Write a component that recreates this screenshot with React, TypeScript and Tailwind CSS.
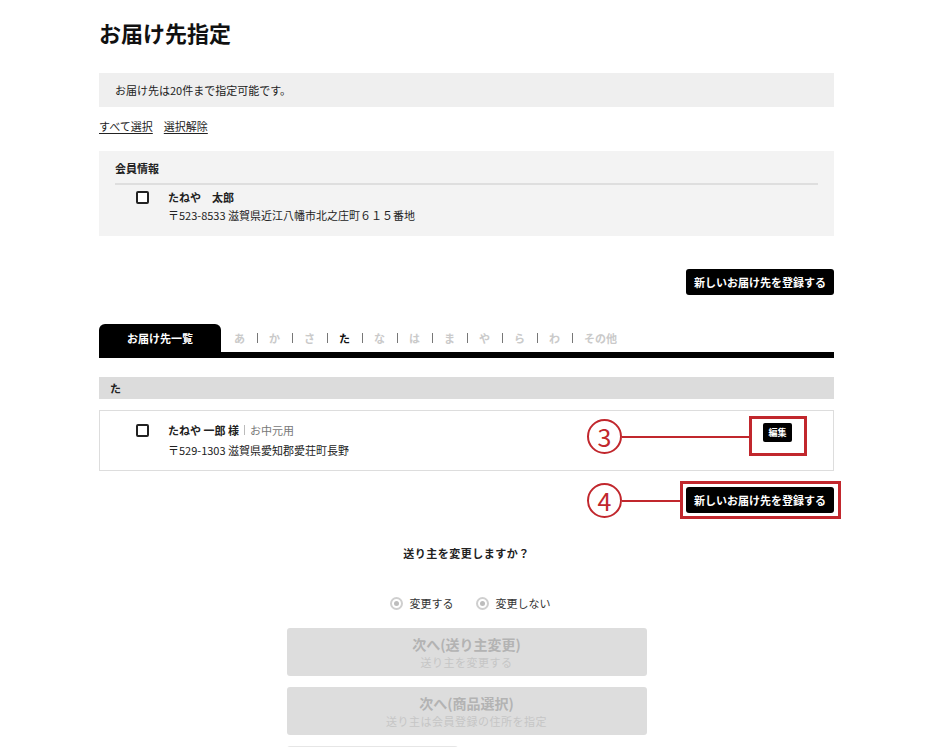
import React from "react";

const kana = ["あ", "か", "さ", "た", "な", "は", "ま", "や", "ら", "わ", "その他"];

const Checkbox: React.FC = () => (
  <span className="mt-[2px] block h-[13px] w-[13px] shrink-0 rounded-[2px] border-2 border-[#222] bg-white" />
);

const BlackButton: React.FC<{ label: string }> = ({ label }) => (
  <button className="h-[26px] rounded-[3px] bg-black px-[8px] text-[11px] font-bold leading-none text-white">
    {label}
  </button>
);

const Radio: React.FC<{ label: string }> = ({ label }) => (
  <label className="flex items-center gap-[7px]">
    <span className="flex h-[13px] w-[13px] items-center justify-center rounded-full border-2 border-[#cfcfcf] bg-white">
      <span className="h-[5px] w-[5px] rounded-full bg-[#bdbdbd]" />
    </span>
    <span className="text-[11px] text-[#333]">{label}</span>
  </label>
);

const NextButton: React.FC<{ title: string; sub: string }> = ({ title, sub }) => (
  <div className="flex h-[48px] w-[360px] flex-col items-center justify-center rounded-[3px] bg-[#dddddd]">
    <span className="text-[14px] font-bold leading-[20px] text-[#b3b3b3]">{title}</span>
    <span className="text-[11px] leading-[16px] tracking-[0.5px] text-[#c6c6c6]">{sub}</span>
  </div>
);

const Annotation: React.FC<{ n: string; cy: number; lineTo: number; box: { x: number; y: number; w: number; h: number } }> = ({
  n,
  cy,
  lineTo,
  box,
}) => (
  <>
    <div
      className="absolute flex h-[35px] w-[35px] items-center justify-center rounded-full border-2 border-[#c1272d] bg-white text-[25px] font-normal leading-none text-[#c1272d]"
      style={{ left: 587, top: cy - 17 }}
    >
      {n}
    </div>
    <div className="absolute h-[2px] bg-[#c1272d]" style={{ left: 622, top: cy, width: lineTo - 622 }} />
    <div
      className="absolute border-[3px] border-[#c1272d]"
      style={{ left: box.x, top: box.y, width: box.w, height: box.h }}
    />
  </>
);

export default function App() {
  return (
    <div
      className="relative min-h-[747px] w-[950px] overflow-hidden bg-white text-[#222]"
      style={{ fontFamily: '"Noto Sans CJK JP", "Noto Sans", sans-serif' }}
    >
      <div className="ml-[99px] w-[735px] pb-[20px]">
        <h1 className="mt-[17px] text-[22px] font-bold leading-[30px] text-[#111]">お届け先指定</h1>

        <div className="mt-[26px] flex h-[34px] items-center bg-[#efefef] px-[16px] text-[11px]">
          お届け先は20件まで指定可能です。
        </div>

        <div className="mt-[11px] flex gap-[11px] text-[11px] leading-[16px]">
          <a className="underline underline-offset-2">すべて選択</a>
          <a className="underline underline-offset-2">選択解除</a>
        </div>

        <div className="mt-[17px] h-[85px] bg-[#f3f3f3] px-[16px] pt-[9px]">
          <div className="border-b-2 border-[#dedede] pb-[7px] text-[11px] font-bold leading-[16px]">会員情報</div>
          <div className="mt-[4px] flex gap-[19px] pl-[21px]">
            <Checkbox />
            <div className="text-[11px] leading-[16px]">
              <div className="font-bold">たねや　太郎</div>
              <div className="mt-[2px]">〒523-8533 滋賀県近江八幡市北之庄町６１５番地</div>
            </div>
          </div>
        </div>

        <div className="mt-[33px] flex justify-end">
          <BlackButton label="新しいお届け先を登録する" />
        </div>

        <div className="mt-[29px]">
          <div className="flex items-end">
            <div className="flex h-[28px] w-[122px] items-center justify-center rounded-t-[6px] bg-black text-[11px] font-bold text-white">
              お届け先一覧
            </div>
            <div className="ml-[13px] flex h-[28px] items-center text-[11px] font-bold text-[#cacaca]">
              {kana.map((k, i) => (
                <React.Fragment key={k}>
                  {i > 0 && <span className="ml-[12px] mr-[11px] h-[10px] w-[1px] bg-[#777]" />}
                  <span className={k === "た" ? "text-[#111]" : ""}>{k}</span>
                </React.Fragment>
              ))}
            </div>
          </div>
          <div className="h-[6px] bg-black" />
        </div>

        <div className="mt-[19px] flex h-[22px] items-center bg-[#dcdcdc] px-[11px] text-[11px] font-bold">た</div>

        <div className="mt-[11px] flex h-[61px] items-start border border-[#dddddd] bg-white pl-[36px] pr-[41px] pt-[11px]">
          <Checkbox />
          <div className="ml-[19px] flex-1 text-[11px] leading-[16px]">
            <div className="flex items-center">
              <span className="font-bold">たねや 一郎 様</span>
              <span className="mx-[5px] h-[10px] w-[1px] bg-[#bbb]" />
              <span className="text-[#777]">お中元用</span>
            </div>
            <div className="mt-[4px]">〒529-1303 滋賀県愛知郡愛荘町長野</div>
          </div>
          <button className="mt-[1px] h-[19px] w-[29px] rounded-[2px] bg-black text-[9px] font-bold leading-none text-white">
            編集
          </button>
        </div>

        <div className="mt-[16px] flex justify-end">
          <BlackButton label="新しいお届け先を登録する" />
        </div>

        <div className="mt-[32px] text-center text-[11px] font-bold leading-[16px] tracking-[0.5px]">送り主を変更しますか？</div>

        <div className="mt-[34px] flex h-[16px] items-center justify-center gap-[22px] pl-[7px]">
          <Radio label="変更する" />
          <Radio label="変更しない" />
        </div>

        <div className="mt-[17px] flex flex-col items-center gap-[11px]">
          <NextButton title="次へ(送り主変更)" sub="送り主を変更する" />
          <NextButton title="次へ(商品選択)" sub="送り主は会員登録の住所を指定" />
          <div className="flex w-[360px]">
            <div className="h-[20px] w-[171px] rounded-t-[3px] border-t border-[#e6e6e6]" />
          </div>
        </div>
      </div>

      <Annotation n="3" cy={436} lineTo={749} box={{ x: 749, y: 416, w: 58, h: 40 }} />
      <Annotation n="4" cy={500} lineTo={680} box={{ x: 680, y: 481, w: 161, h: 38 }} />
    </div>
  );
}
